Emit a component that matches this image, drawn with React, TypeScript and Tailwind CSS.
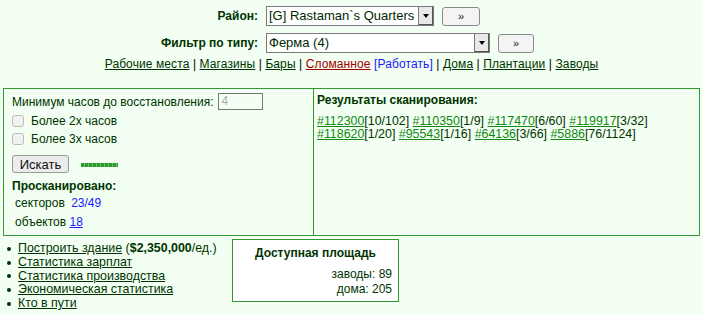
import React from "react";

const ff = "font-['Liberation_Sans',Arial,sans-serif]";

const Sel = ({ value, w }: { value: string; w: string }) => (
  <div className={`flex h-[20px] ${w} items-stretch border border-[#7a7a7a] bg-white`}>
    <span className="flex-1 truncate pl-[2px] text-[13px] leading-[18px] text-[#002800]">{value}</span>
    <span className="flex w-[15px] items-center justify-center border-l border-[#7a7a7a] bg-[#e8e8e8] shadow-[inset_-1px_-1px_0_#555]">
      <span className="border-x-[3px] border-t-[4px] border-x-transparent border-t-black" />
    </span>
  </div>
);

const Go = ({ w }: { w: string }) => (
  <button className={`h-[19px] ${w} rounded-[3px] border border-[#8a8a8a] bg-[#f4f4f4] text-[11px] leading-none text-[#222]`}>»</button>
);

const Sep = () => <span className="text-black"> | </span>;

const Box = () => <span className="h-[12px] w-[12px] rounded-[3px] border border-[#bbb] bg-[#f2f2f2]" />;

export default function App() {
  const results: [string, string][] = [
    ["#112300", "[10/102]"],
    ["#110350", "[1/9]"],
    ["#117470", "[6/60]"],
    ["#119917", "[3/32]"],
    ["#118620", "[1/20]"],
    ["#95543", "[1/16]"],
    ["#64136", "[3/66]"],
    ["#5886", "[76/1124]"],
  ];
  return (
    <div className={`${ff} h-[314px] w-[703px] overflow-hidden bg-[#f2fff2] text-[12px] text-[#003300]`}>
      <div className="grid grid-cols-[258px_auto] items-center gap-x-[8px] gap-y-[7px] pt-[6px]">
        <div className="text-right text-[12px] font-bold text-[#003300]">Район:</div>
        <div className="flex items-center gap-[8px]">
          <Sel value="[G] Rastaman`s Quarters" w="w-[168px]" />
          <Go w="w-[38px]" />
        </div>
        <div className="text-right text-[12px] font-bold text-[#003300]">Фильтр по типу:</div>
        <div className="flex items-center gap-[8px]">
          <Sel value="Ферма (4)" w="w-[224px]" />
          <Go w="w-[36px]" />
        </div>
      </div>
      <div className="mt-[3px] text-center text-[12px] leading-[16px] tracking-[0.1px]">
        <a className="text-[#003300] underline">Рабочие места</a>
        <Sep />
        <a className="text-[#003300] underline">Магазины</a>
        <Sep />
        <a className="text-[#003300] underline">Бары</a>
        <Sep />
        <a className="text-[#a00000] underline">Сломанное</a>{" "}
        <span className="text-[#1a1aff]">[Работать]</span>
        <Sep />
        <a className="text-[#003300] underline">Дома</a>
        <Sep />
        <a className="text-[#003300] underline">Плантации</a>
        <Sep />
        <a className="text-[#003300] underline">Заводы</a>
      </div>

      <div className="mx-[3px] mt-[16px] grid h-[148px] grid-cols-[310px_1fr] border border-[#339933]">
        <div className="border-r border-[#339933] pl-[8px] pt-[4px]">
          <div className="flex h-[17px] items-center gap-[4px]">
            <span>Минимум часов до восстановления:</span>
            <span className="h-[17px] w-[45px] border border-[#777] bg-[#f4fff4] pl-[3px] text-[12px] leading-[15px] text-[#aaa]">4</span>
          </div>
          <label className="mt-[4px] flex h-[13px] items-center gap-[7px]">
            <Box />
            <span>Более 2х часов</span>
          </label>
          <label className="mt-[5px] flex h-[13px] items-center gap-[7px]">
            <Box />
            <span>Более 3х часов</span>
          </label>
          <div className="mt-[10px] flex items-center gap-[12px]">
            <button className="h-[18px] w-[57px] rounded-[3px] border border-[#999] bg-[#ececec] text-[13px] leading-none text-[#111]">
              Искать
            </button>
            <span className="mt-[2px] h-[4px] w-[37px] bg-[repeating-linear-gradient(90deg,#2f9a2f_0_3px,#5fc25f_3px_4px)]" />
          </div>
          <div className="mt-[6px] text-[12px] font-bold leading-[14px]">Просканировано:</div>
          <div className="mt-[1px] pl-[3px] leading-[19px]">
            <div>
              секторов <span className="ml-[3px] text-[#1a1aff]">23/49</span>
            </div>
            <div>
              объектов <a className="text-[#1a1aff] underline">18</a>
            </div>
          </div>
        </div>
        <div className="pl-[3px] pt-[4px]">
          <div className="text-[12px] font-bold leading-[14px]">Результаты сканирования:</div>
          <div className="mt-[8px] w-[350px] text-[12.4px] leading-[12.5px]">
            {results.map(([id, v]) => (
              <React.Fragment key={id}>
                <a className="text-[#118811] underline">{id}</a>
                {v}{" "}
              </React.Fragment>
            ))}
          </div>
        </div>
      </div>

      <div className="flex items-start">
        <ul className="w-[232px] pl-[7px] pt-[6px] text-[12.4px] leading-[13.8px]">
          {[
            "Построить здание",
            "Статистика зарплат",
            "Статистика производства",
            "Экономическая статистика",
            "Кто в пути",
          ].map((t, i) => (
            <li key={t} className="flex items-center gap-[7px]">
              <span className="h-[4px] w-[4px] rounded-full bg-[#003300]" />
              <span>
                <a className="underline">{t}</a>
                {i === 0 && (
                  <>
                    {" "}(<b>$2,350,000</b>/ед.)
                  </>
                )}
              </span>
            </li>
          ))}
        </ul>
        <div className="mt-[3px] h-[63px] w-[167px] border border-[#339933] bg-white px-[6px] pt-[6px] text-right">
          <div className="text-center text-[12px] font-bold leading-[14px]">Доступная площадь</div>
          <div className="mt-[7px] leading-[15px]">заводы: 89</div>
          <div className="leading-[15px]">дома: 205</div>
        </div>
      </div>
    </div>
  );
}
